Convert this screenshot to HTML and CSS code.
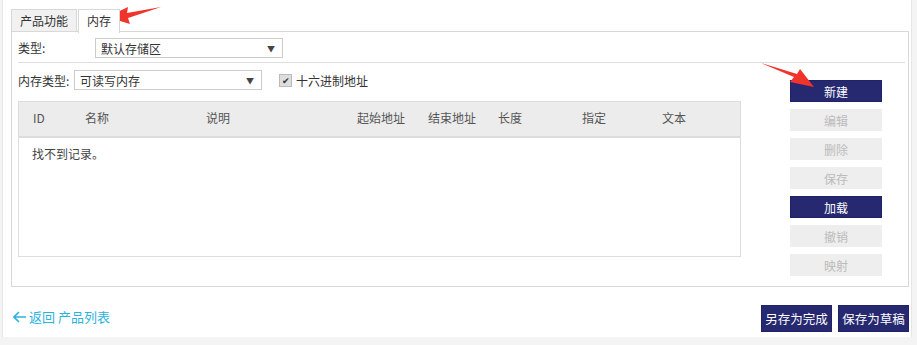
FILE: index.html
```html
<!DOCTYPE html>
<html lang="zh-CN">
<head>
    <meta charset="UTF-8">
    <title>内存</title>
    <link rel="stylesheet" href="styles.css">
</head>
<body>
    <div class="page">
        <div class="tabs">
            <div class="tab">产品功能</div>
            <div class="tab active">内存</div>
        </div>
        <div class="panel">
            <div class="row row-type">
                <label class="lbl">类型:</label>
                <div class="select sel-type">默认存储区<span class="caret">▼</span></div>
            </div>
            <div class="body">
                <div class="main">
                    <div class="row row-mem">
                        <label class="lbl">内存类型:</label>
                        <div class="select sel-mem">可读写内存<span class="caret">▼</span></div>
                        <label class="check"><span class="box">✔</span>十六进制地址</label>
                    </div>
                    <div class="grid">
                        <div class="grid-head">
                            <span class="c-id">ID</span>
                            <span class="c-name">名称</span>
                            <span class="c-desc">说明</span>
                            <span class="c-start">起始地址</span>
                            <span class="c-end">结束地址</span>
                            <span class="c-len">长度</span>
                            <span class="c-assign">指定</span>
                            <span class="c-text">文本</span>
                        </div>
                        <div class="grid-empty">找不到记录。</div>
                    </div>
                </div>
                <div class="actions">
                    <button class="btn">新建</button>
                    <button class="btn off">编辑</button>
                    <button class="btn off">删除</button>
                    <button class="btn off">保存</button>
                    <button class="btn">加载</button>
                    <button class="btn off">撤销</button>
                    <button class="btn off">映射</button>
                </div>
            </div>
        </div>
        <div class="footer">
            <a class="back" href="#"><svg width="14" height="12" viewBox="0 0 14 12"><path d="M6 1 L1 6 L6 11 M1 6 H13" fill="none" stroke="#2bb3e0" stroke-width="1.6"/></svg>返回 产品列表</a>
            <div class="footer-btns">
                <button class="btn big">另存为完成</button>
                <button class="btn big">保存为草稿</button>
            </div>
        </div>
    </div>
    <svg class="arrow arrow-tab" width="56" height="22" viewBox="0 0 56 22">
        <path d="M55 3 L21 9 L22 3 L1 13 L24 20 L22 14 Z" fill="#f0342c"/>
    </svg>
    <svg class="arrow arrow-new" width="56" height="30" viewBox="0 0 56 30">
        <path d="M1 1 L34 15 L30 20 L54 25 L40 7 L37 12 Z" fill="#f0342c"/>
    </svg>
</body>
</html>
```

FILE: styles.css
```css
body {
    margin: 0;
    background: #f4f4f4;
    font-family: "Noto Sans CJK SC", "Liberation Sans", sans-serif;
    font-size: 12px;
    color: #333;
    position: relative;
}

.page {
    margin: 0 5px 0 2px;
    background: #fff;
    border-left: 1px solid #e6e6e6;
    border-right: 1px solid #e6e6e6;
    padding: 9px 2px 0 8px;
    height: 337px;
    box-sizing: border-box;
}

.tabs {
    display: flex;
    height: 22px;
    position: relative;
    z-index: 1;
}

.tab {
    border: 1px solid #d8d8d8;
    border-bottom: none;
    background: #f1f1f1;
    padding: 0 8px;
    line-height: 21px;
    margin-right: 1px;
}

.tab.active {
    background: #fff;
    height: 23px;
}

.panel {
    border: 1px solid #d8d8d8;
    height: 256px;
    box-sizing: border-box;
    padding: 0 3px 0 6px;
}

.row {
    display: flex;
    align-items: center;
}

.row-type {
    height: 29px;
    border-bottom: 1px solid #ddd;
    padding-top: 1px;
}

.row-type .lbl {
    width: 77px;
}

.row-mem {
    height: 28px;
    padding-top: 3px;
}

.row-mem .lbl {
    width: 56px;
}

.select {
    border: 1px solid #ccc;
    line-height: 19px;
    padding-left: 5px;
    box-sizing: border-box;
    height: 20px;
    position: relative;
}

.sel-type {
    width: 188px;
}

.sel-mem {
    width: 188px;
}

.caret {
    position: absolute;
    right: 7px;
    top: 0;
    font-size: 8px;
    color: #444;
}

.check {
    margin-left: 17px;
    display: flex;
    align-items: center;
}

.box {
    width: 11px;
    height: 11px;
    background: #ddd;
    border: 1px solid #bbb;
    font-size: 9px;
    line-height: 11px;
    text-align: center;
    margin-right: 4px;
    color: #333;
}

.body {
    display: flex;
}

.main {
    width: 723px;
}

.grid {
    margin-top: 7px;
    border: 1px solid #ddd;
    height: 156px;
    box-sizing: border-box;
}

.grid-head {
    background: #ececec;
    border-bottom: 2px solid #ddd;
    height: 34px;
    line-height: 32px;
    position: relative;
    color: #555;
}

.grid-head span {
    position: absolute;
    top: 0;
}

.c-id { left: 14px; }
.c-name { left: 66px; }
.c-desc { left: 187px; }
.c-start { left: 338px; }
.c-end { left: 409px; }
.c-len { left: 479px; }
.c-assign { left: 563px; }
.c-text { left: 643px; }

.grid-empty {
    padding: 7px 13px;
    color: #444;
}

.actions {
    margin-left: 49px;
    padding-top: 17px;
    display: flex;
    flex-direction: column;
    gap: 7px;
}

.btn {
    width: 92px;
    height: 22px;
    border: 1px solid #1f2266;
    background: #26296f;
    color: #fff;
    font-family: inherit;
    font-size: 12px;
    padding: 0;
}

.btn.off {
    background: #eeeeee;
    border-color: #eeeeee;
    color: #bbb;
}

.footer {
    display: flex;
    justify-content: space-between;
    align-items: center;
    padding: 18px 0 0 2px;
}

.back {
    color: #2bb3e0;
    text-decoration: none;
    font-size: 13px;
    display: flex;
    align-items: center;
    gap: 2px;
    margin-bottom: 4px;
}

.footer-btns {
    display: flex;
    gap: 6px;
}

.btn.big {
    width: 71px;
    height: 27px;
    font-size: 12.5px;
}

.arrow {
    position: absolute;
}

.arrow-tab {
    left: 106px;
    top: 4px;
}

.arrow-new {
    left: 760px;
    top: 62px;
}
```
